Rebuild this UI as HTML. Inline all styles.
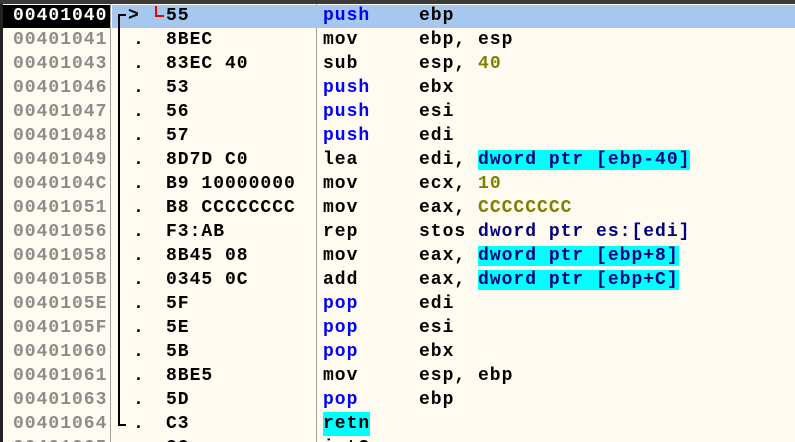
<!DOCTYPE html>
<html style="overflow:hidden;width:795px;height:442px"><head><style>
body{margin:0;width:795px;height:442px;overflow:hidden;background:#fffbf0;position:relative;font-family:"Liberation Mono",monospace;font-weight:bold;font-size:18px;letter-spacing:1px}
.r{position:absolute;left:0;width:795px;height:24px;line-height:24px}
.r span{position:absolute;white-space:pre}
.a{left:13px;color:#8c8c8c}
.d{left:133px}
.h{left:166px}
.m{left:323px}
.o{left:419px}
.b{color:#0000ff}
.n{color:#000080}
.c{color:#808000}
.y{background:#00ffff}
</style></head><body>
<div style="position:absolute;left:0;top:0;width:795px;height:4px;background:#3a3a3a"></div>
<div style="position:absolute;left:0;top:4px;width:3px;height:438px;background:#222"></div>
<div style="position:absolute;left:110px;top:4px;width:1px;height:438px;background:#a0a0a0"></div>
<div style="position:absolute;left:316px;top:4px;width:1px;height:438px;background:#a0a0a0"></div>
<div style="position:absolute;left:112px;top:5px;width:683px;height:23px;background:#a6c8ee"></div>
<div style="position:absolute;left:3px;top:5px;width:107px;height:23px;background:#000"></div>
<div style="position:absolute;left:118px;top:14px;width:2px;height:412px;background:#000"></div>
<div style="position:absolute;left:118px;top:14px;width:8px;height:2px;background:#000"></div>
<div style="position:absolute;left:118px;top:424px;width:8px;height:2px;background:#000"></div>
<div style="position:absolute;left:155px;top:6px;width:2px;height:10px;background:#e00"></div>
<div style="position:absolute;left:155px;top:15px;width:9px;height:2px;background:#e00"></div>
<div class="r" style="top:4px"><span class="a" style="color:#fff">00401040</span><span style="left:128px">&gt;</span><span class="h">55</span><span class="m b">push</span><span class="o">ebp</span></div>
<div class="r" style="top:28px"><span class="a">00401041</span><span class="d">.</span><span class="h">8BEC</span><span class="m">mov</span><span class="o">ebp, esp</span></div>
<div class="r" style="top:52px"><span class="a">00401043</span><span class="d">.</span><span class="h">83EC 40</span><span class="m">sub</span><span class="o">esp, <b class="c">40</b></span></div>
<div class="r" style="top:76px"><span class="a">00401046</span><span class="d">.</span><span class="h">53</span><span class="m b">push</span><span class="o">ebx</span></div>
<div class="r" style="top:100px"><span class="a">00401047</span><span class="d">.</span><span class="h">56</span><span class="m b">push</span><span class="o">esi</span></div>
<div class="r" style="top:124px"><span class="a">00401048</span><span class="d">.</span><span class="h">57</span><span class="m b">push</span><span class="o">edi</span></div>
<div class="r" style="top:148px"><span class="a">00401049</span><span class="d">.</span><span class="h">8D7D C0</span><span class="m">lea</span><span class="o">edi, <b class="n y">dword ptr [ebp-40]</b></span></div>
<div class="r" style="top:172px"><span class="a">0040104C</span><span class="d">.</span><span class="h">B9 10000000</span><span class="m">mov</span><span class="o">ecx, <b class="c">10</b></span></div>
<div class="r" style="top:196px"><span class="a">00401051</span><span class="d">.</span><span class="h">B8 CCCCCCCC</span><span class="m">mov</span><span class="o">eax, <b class="c">CCCCCCCC</b></span></div>
<div class="r" style="top:220px"><span class="a">00401056</span><span class="d">.</span><span class="h">F3:AB</span><span class="m">rep</span><span class="o">stos <b class="n">dword ptr es:[edi]</b></span></div>
<div class="r" style="top:244px"><span class="a">00401058</span><span class="d">.</span><span class="h">8B45 08</span><span class="m">mov</span><span class="o">eax, <b class="n y">dword ptr [ebp+8]</b></span></div>
<div class="r" style="top:268px"><span class="a">0040105B</span><span class="d">.</span><span class="h">0345 0C</span><span class="m">add</span><span class="o">eax, <b class="n y">dword ptr [ebp+C]</b></span></div>
<div class="r" style="top:292px"><span class="a">0040105E</span><span class="d">.</span><span class="h">5F</span><span class="m b">pop</span><span class="o">edi</span></div>
<div class="r" style="top:316px"><span class="a">0040105F</span><span class="d">.</span><span class="h">5E</span><span class="m b">pop</span><span class="o">esi</span></div>
<div class="r" style="top:340px"><span class="a">00401060</span><span class="d">.</span><span class="h">5B</span><span class="m b">pop</span><span class="o">ebx</span></div>
<div class="r" style="top:364px"><span class="a">00401061</span><span class="d">.</span><span class="h">8BE5</span><span class="m">mov</span><span class="o">esp, ebp</span></div>
<div class="r" style="top:388px"><span class="a">00401063</span><span class="d">.</span><span class="h">5D</span><span class="m b">pop</span><span class="o">ebp</span></div>
<div class="r" style="top:412px"><span class="a">00401064</span><span class="d">.</span><span class="h">C3</span><span class="m y">retn</span></div>
<div class="r" style="top:436px;height:6px;overflow:hidden"><span class="a">00401065</span><span class="h">CC</span><span class="m">int3</span></div>
</body></html>
